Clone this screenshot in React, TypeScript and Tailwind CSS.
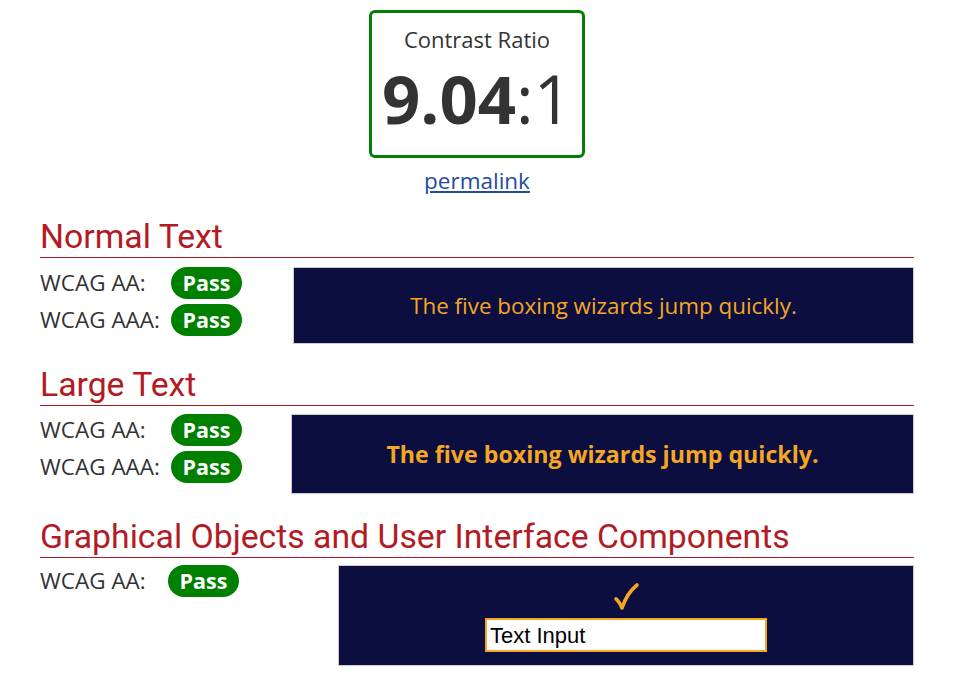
const body = { fontFamily: '"Open Sans", "Liberation Sans", sans-serif' };
const heading = { fontFamily: 'Roboto, "Liberation Sans", sans-serif' };

function Badge() {
  return (
    <span className="flex h-[32px] w-[71px] items-center justify-center rounded-full bg-[#008000] text-[21.5px] font-bold text-white">
      Pass
    </span>
  );
}

function Label({ text, badgeLeft }: { text: string; badgeLeft: string }) {
  return (
    <div className="flex h-[32px] items-center">
      <span className={`${badgeLeft} text-[22.5px] text-[#333]`}>{text}</span>
      <Badge />
    </div>
  );
}

function Section({ title, children }: { title: string; children: React.ReactNode }) {
  return (
    <section>
      <h2 style={heading} className="pb-[1px] text-[33.75px] leading-[38px] text-[#b31b24]">
        {title}
      </h2>
      <div className="h-[1px] bg-[#b31b24]" />
      {children}
    </section>
  );
}

function Check() {
  return (
    <svg width="28" height="30" viewBox="0 0 28 30" fill="none">
      <path
        d="M4 17 Q7 19 10 26 Q15 11 25 3"
        stroke="#f5a623"
        strokeWidth="3.6"
        strokeLinecap="round"
        strokeLinejoin="round"
      />
    </svg>
  );
}

export default function App() {
  return (
    <div style={body} className="min-h-[690px] bg-white pt-[10px] text-[#333]">
      <div className="ml-[40px] w-[874px]">
        <div className="flex flex-col items-center">
          <div className="flex h-[148px] w-[216px] flex-col items-center rounded-[6px] border-[3px] border-[#008000]">
            <div className="mt-[11px] text-[22px] leading-[30px] text-[#333]">Contrast Ratio</div>
            <div className="mt-[2px] text-[67px] leading-[84px] text-[#333]">
              <span className="font-bold">9.04</span>:1
            </div>
          </div>
          <a href="#" className="mt-[8px] text-[22.5px] leading-[30px] text-[#244c9c] underline">
            permalink
          </a>
        </div>

        <div className="mt-[22px]">
          <Section title="Normal Text">
            <div className="mt-[9px] flex">
              <div className="flex w-[253px] flex-col gap-[5px]">
                <Label text="WCAG AA:" badgeLeft="w-[131px]" />
                <Label text="WCAG AAA:" badgeLeft="w-[131px]" />
              </div>
              <div className="flex h-[77px] flex-1 items-center justify-center border border-[#ccc] bg-[#0c0e3f] text-[22.4px] text-[#f5a623]">
                The five boxing wizards jump quickly.
              </div>
            </div>
          </Section>
        </div>

        <div className="mt-[22px]">
          <Section title="Large Text">
            <div className="mt-[8px] flex">
              <div className="flex w-[251px] flex-col gap-[5px]">
                <Label text="WCAG AA:" badgeLeft="w-[131px]" />
                <Label text="WCAG AAA:" badgeLeft="w-[131px]" />
              </div>
              <div className="flex h-[80px] flex-1 items-center justify-center border border-[#ccc] bg-[#0c0e3f] text-[23.2px] font-bold text-[#f5a623]">
                The five boxing wizards jump quickly.
              </div>
            </div>
          </Section>
        </div>

        <div className="mt-[24px]">
          <Section title="Graphical Objects and User Interface Components">
            <div className="mt-[7px] flex">
              <div className="flex w-[298px] flex-col">
                <Label text="WCAG AA:" badgeLeft="w-[128px]" />
              </div>
              <div className="flex h-[101px] flex-1 flex-col items-center border border-[#ccc] bg-[#0c0e3f]">
                <div className="mt-[16px] h-[30px]">
                  <Check />
                </div>
                <div
                  style={{ fontFamily: '"Liberation Sans", Arial, sans-serif' }}
                  className="mt-[6px] flex h-[34px] w-[282px] items-center border-2 border-[#f5a623] bg-white pl-[3px] text-[22px] text-black"
                >
                  Text Input
                </div>
              </div>
            </div>
          </Section>
        </div>
      </div>
    </div>
  );
}
